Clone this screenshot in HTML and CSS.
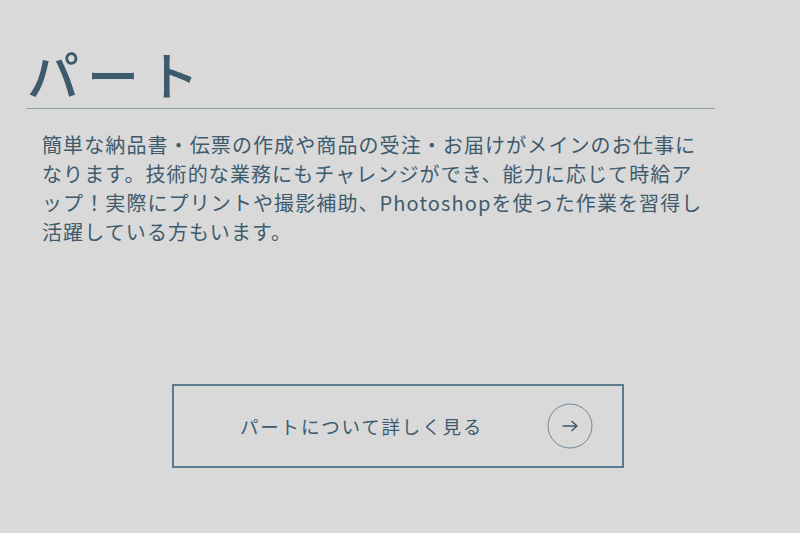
FILE: index.html
```html
<!DOCTYPE html>
<html lang="ja">
<head>
    <meta charset="UTF-8">
    <title>パート</title>
    <link rel="stylesheet" href="styles.css">
</head>
<body>
<div class="part">
    <h2 class="part_title">パート</h2>
    <p class="part_text">簡単な納品書・伝票の作成や商品の受注・お届けがメインのお仕事になります。技術的な業務にもチャレンジができ、能力に応じて時給アップ！実際にプリントや撮影補助、Photoshopを使った作業を習得し活躍している方もいます。</p>
</div>

<a class="more_btn" href="#">
    <span class="more_label">パートについて詳しく見る</span>
    <span class="more_icon">
        <svg width="46" height="46" viewBox="0 0 46 46">
            <circle cx="23" cy="23" r="22" fill="none" stroke="#6f8896" stroke-width="1"/>
            <path d="M16 23h14M25 18.5l5 4.5-5 4.5" fill="none" stroke="#3e5b6e" stroke-width="1.6" stroke-linecap="round" stroke-linejoin="round"/>
        </svg>
    </span>
</a>
</body>
</html>
```

FILE: styles.css
```css
*{
    margin: 0;
    padding: 0;
}
body{
    background: #d9d9d9;
    color: #3e5b6e;
    font-family: "Noto Sans CJK JP", "Noto Sans", sans-serif;
}
.part{
    margin: 0 0 0 26px;
    width: 689px;
    padding-top: 44px;
}
.part_title{
    font-size: 52px;
    font-weight: 500;
    line-height: 60px;
    letter-spacing: 8px;
    padding: 0 0 4px 1px;
    border-bottom: 1px solid #8ea2ae;
}
.part_text{
    margin-top: 21px;
    padding: 0 4px 0 16px;
    font-size: 20px;
    line-height: 29px;
    letter-spacing: 1.1px;
}
.more_btn{
    display: flex;
    align-items: center;
    justify-content: space-between;
    box-sizing: border-box;
    width: 452px;
    height: 84px;
    margin: 138px 0 0 172px;
    padding: 0 29px 0 66px;
    border: 2px solid #5d7b8d;
    color: #3e5b6e;
    text-decoration: none;
}
.more_label{
    font-size: 18.5px;
    letter-spacing: 1.8px;
}
.more_icon{
    display: flex;
}
```
